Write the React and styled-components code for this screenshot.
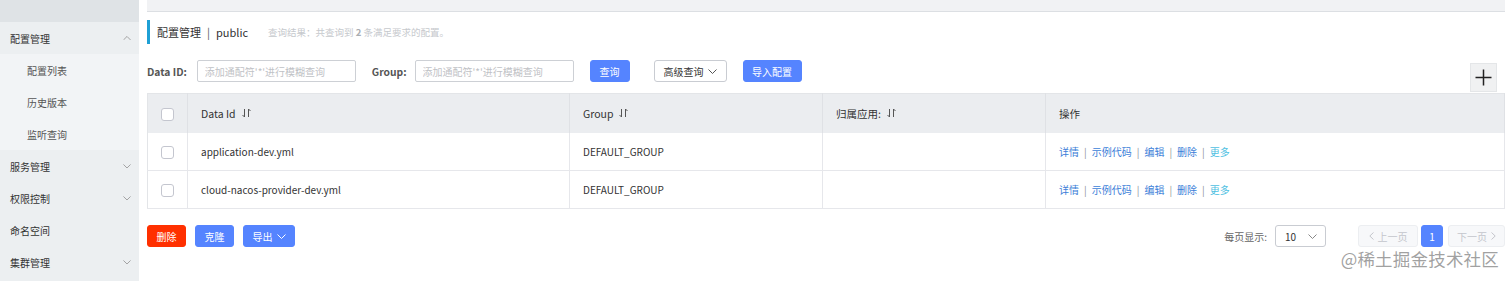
import React from 'react'
import styled, { createGlobalStyle } from 'styled-components'

const GlobalStyle = createGlobalStyle`
  html, body {
    margin: 0;
    padding: 0;
    background: #fff;
  }
  body {
    font-family: "Noto Sans CJK SC", "Noto Sans", sans-serif;
    font-size: 10px;
    color: #333;
  }
  * {
    box-sizing: border-box;
  }
`

const Layout = styled.div`
  position: relative;
  display: flex;
  height: 281px;
  overflow: hidden;
`

const Sidebar = styled.aside`
  width: 139px;
  flex-shrink: 0;
  display: flex;
  flex-direction: column;
  background: #eceff1;
`

const SideTop = styled.div`
  height: 22px;
  background: #dfe3e6;
`

const MenuItem = styled.div`
  height: 32px;
  display: flex;
  align-items: center;
  justify-content: space-between;
  padding: 0 8px 0 ${(p) => (p.$sub ? 27 : 10)}px;
  background: ${(p) => (p.$sub ? '#f2f4f6' : 'transparent')};
  color: ${(p) => (p.$sub ? '#555' : '#333')};
`

const Main = styled.main`
  flex: 1;
  display: flex;
  flex-direction: column;
  padding: 0 7px 0 8px;
`

const Crumb = styled.div`
  height: 12px;
  background: #f1f2f4;
  border-bottom: 1px solid #dcdfe3;
`

const TitleRow = styled.div`
  margin-top: 8px;
  height: 24px;
  display: flex;
  align-items: center;
  border-left: 3px solid #1fa0d5;
  padding-left: 7px;
`

const TitleText = styled.span`
  font-size: 11px;
  color: #333;
`

const Pipe = styled.span`
  margin: 0 6px;
  font-size: 11px;
  color: #555;
`

const Summary = styled.span`
  margin-left: 20px;
  font-size: 9.5px;
  color: #c6c9cd;

  b {
    color: #a9adb2;
  }
`

const FilterRow = styled.div`
  margin-top: 16px;
  display: flex;
  align-items: flex-start;
`

const Label = styled.label`
  height: 22px;
  display: flex;
  align-items: center;
  margin: 0 ${(p) => p.$after || 10}px 0 ${(p) => p.$gap || 0}px;
  font-size: 10.3px;
  font-weight: bold;
  color: #555;
`

const Input = styled.input`
  width: 159px;
  height: 22px;
  padding: 0 7px;
  border: 1px solid #cdd0d5;
  border-radius: 2px;
  font-family: inherit;
  font-size: 10px;
  outline: none;

  &::placeholder {
    color: #bfc2c6;
  }
`

const Button = styled.button`
  height: 22px;
  width: ${(p) => p.$w}px;
  margin-left: ${(p) => p.$gap || 0}px;
  padding: 0;
  display: inline-flex;
  align-items: center;
  justify-content: center;
  gap: 4px;
  border-radius: 3px;
  font-family: inherit;
  font-size: 10px;
  border: 1px solid
    ${(p) => (p.$kind === 'ghost' ? '#c9ccd2' : p.$kind === 'danger' ? '#ff3000' : '#5584ff')};
  background: ${(p) => (p.$kind === 'ghost' ? '#fff' : p.$kind === 'danger' ? '#ff3000' : '#5584ff')};
  color: ${(p) => (p.$kind === 'ghost' ? '#333' : '#fff')};
`

const PlusButton = styled.div`
  margin: 3px 8px 0 auto;
  width: 27px;
  height: 29px;
  display: flex;
  align-items: center;
  justify-content: center;
  background: #f0f1f2;
  border: 1px solid #e4e6e8;
`

const Table = styled.table`
  margin-top: 1px;
  width: 100%;
  border-collapse: collapse;
  table-layout: fixed;
  border: 1px solid #e3e5e8;
`

const Th = styled.th`
  height: 39px;
  padding: 0 13px;
  background: #ebedf0;
  border-right: 1px solid #dfe1e5;
  text-align: ${(p) => (p.$center ? 'center' : 'left')};
  font-weight: normal;
  font-size: 10.5px;
  color: #333;
`

const Td = styled.td`
  height: 38px;
  padding: 0 13px;
  border-right: 1px solid #e6e7eb;
  border-bottom: 1px solid #e6e7eb;
  text-align: ${(p) => (p.$center ? 'center' : 'left')};
  color: #333;
`

const HeadCell = styled.span`
  display: inline-flex;
  align-items: center;
  gap: 6px;
`

const Check = styled.span`
  display: inline-block;
  width: 13px;
  height: 13px;
  vertical-align: middle;
  border: 1px solid #c4c6cf;
  border-radius: 3px;
  background: #fff;
`

const Link = styled.a`
  color: ${(p) => (p.$more ? '#4fbfe2' : '#3b7ed8')};
  text-decoration: none;
`

const Sep = styled.span`
  margin: 0 5px;
  color: #8f949a;
`

const Footer = styled.div`
  margin-top: 16px;
  display: flex;
  align-items: center;
  justify-content: space-between;
`

const Group = styled.div`
  display: flex;
  align-items: center;
`

const PageLabel = styled.span`
  margin-right: 8px;
  color: #666;
`

const Select = styled.div`
  width: 51px;
  height: 22px;
  display: flex;
  align-items: center;
  justify-content: space-between;
  padding: 0 8px 0 9px;
  border: 1px solid #c9ccd2;
  border-radius: 3px;
  color: #333;
`

const PageBtn = styled.div`
  height: 22px;
  width: ${(p) => p.$w}px;
  margin-left: ${(p) => p.$gap || 0}px;
  display: flex;
  align-items: center;
  justify-content: center;
  gap: 4px;
  border-radius: 3px;
  border: 1px solid ${(p) => (p.$active ? '#5584ff' : '#eceef1')};
  background: ${(p) => (p.$active ? '#5584ff' : '#f7f8fa')};
  color: ${(p) => (p.$active ? '#fff' : '#c4c6cc')};
`

const Watermark = styled.div`
  position: absolute;
  right: 13px;
  bottom: 10px;
  font-size: 17.5px;
  color: rgba(130, 130, 130, 0.75);
  text-shadow: 0 0 2px #fff;
  letter-spacing: 0.2px;
`

function Chevron({ up, color = '#999', w = 8 }) {
  return (
    <svg width={w} height={w / 1.8} viewBox="0 0 9 5" fill="none">
      <polyline
        points={up ? '0.5,4.5 4.5,0.5 8.5,4.5' : '0.5,0.5 4.5,4.5 8.5,0.5'}
        stroke={color}
        strokeWidth="1"
      />
    </svg>
  )
}

function SortIcon() {
  return (
    <svg width="9" height="10" viewBox="0 0 9 10" fill="none" stroke="#555" strokeWidth="1">
      <path d="M2.5 1V9L0.5 7" />
      <path d="M6.5 9V1L8.5 3" />
    </svg>
  )
}

function Arrow({ left }) {
  return (
    <svg width="5" height="8" viewBox="0 0 5 8" fill="none">
      <polyline points={left ? '4.5,0.5 0.8,4 4.5,7.5' : '0.5,0.5 4.2,4 0.5,7.5'} stroke="#c4c6cc" strokeWidth="1" />
    </svg>
  )
}

const menu = [
  { title: '配置管理', open: true, children: ['配置列表', '历史版本', '监听查询'] },
  { title: '服务管理', arrow: true },
  { title: '权限控制', arrow: true },
  { title: '命名空间' },
  { title: '集群管理', arrow: true },
]

const rows = [
  { id: 'application-dev.yml', group: 'DEFAULT_GROUP' },
  { id: 'cloud-nacos-provider-dev.yml', group: 'DEFAULT_GROUP' },
]

const actions = ['详情', '示例代码', '编辑', '删除']

function App() {
  return (
    <Layout>
      <GlobalStyle />
      <Sidebar>
        <SideTop />
        {menu.map((item) => (
          <React.Fragment key={item.title}>
            <MenuItem>
              <span>{item.title}</span>
              {item.open && <Chevron up />}
              {item.arrow && <Chevron />}
            </MenuItem>
            {item.children &&
              item.children.map((c) => (
                <MenuItem $sub key={c}>
                  {c}
                </MenuItem>
              ))}
          </React.Fragment>
        ))}
      </Sidebar>

      <Main>
        <Crumb />
        <TitleRow>
          <TitleText>配置管理</TitleText>
          <Pipe>|</Pipe>
          <TitleText>public</TitleText>
          <Summary>
            查询结果：共查询到 <b>2</b> 条满足要求的配置。
          </Summary>
        </TitleRow>

        <FilterRow>
          <Label>Data ID:</Label>
          <Input placeholder="添加通配符'*'进行模糊查询" />
          <Label $gap={16} $after={8}>Group:</Label>
          <Input placeholder="添加通配符'*'进行模糊查询" />
          <Button $w={40} $gap={16}>查询</Button>
          <Button $w={73} $gap={24} $kind="ghost">
            高级查询 <Chevron color="#555" w={9} />
          </Button>
          <Button $w={59} $gap={16}>导入配置</Button>
          <PlusButton>
            <svg width="17" height="17" viewBox="0 0 17 17" stroke="#222" strokeWidth="1.5">
              <path d="M8.5 0.5V16.5M0.5 8.5H16.5" />
            </svg>
          </PlusButton>
        </FilterRow>

        <Table>
          <colgroup>
            <col style={{ width: 40 }} />
            <col style={{ width: 382 }} />
            <col style={{ width: 253 }} />
            <col style={{ width: 223 }} />
            <col />
          </colgroup>
          <thead>
            <tr>
              <Th $center>
                <Check />
              </Th>
              <Th>
                <HeadCell>
                  Data Id <SortIcon />
                </HeadCell>
              </Th>
              <Th>
                <HeadCell>
                  Group <SortIcon />
                </HeadCell>
              </Th>
              <Th>
                <HeadCell>
                  归属应用: <SortIcon />
                </HeadCell>
              </Th>
              <Th>操作</Th>
            </tr>
          </thead>
          <tbody>
            {rows.map((r) => (
              <tr key={r.id}>
                <Td $center>
                  <Check />
                </Td>
                <Td>{r.id}</Td>
                <Td>{r.group}</Td>
                <Td />
                <Td>
                  {actions.map((a) => (
                    <React.Fragment key={a}>
                      <Link href="#">{a}</Link>
                      <Sep>|</Sep>
                    </React.Fragment>
                  ))}
                  <Link href="#" $more>
                    更多
                  </Link>
                </Td>
              </tr>
            ))}
          </tbody>
        </Table>

        <Footer>
          <Group>
            <Button $w={39} $kind="danger">删除</Button>
            <Button $w={39} $gap={9}>克隆</Button>
            <Button $w={52} $gap={9}>
              导出 <Chevron color="#fff" w={9} />
            </Button>
          </Group>
          <Group>
            <PageLabel>每页显示:</PageLabel>
            <Select>
              <span>10</span>
              <Chevron color="#888" w={9} />
            </Select>
            <PageBtn $w={60} $gap={32}>
              <Arrow left /> 上一页
            </PageBtn>
            <PageBtn $w={22} $gap={3} $active>
              1
            </PageBtn>
            <PageBtn $w={57} $gap={5}>
              下一页 <Arrow />
            </PageBtn>
          </Group>
        </Footer>
      </Main>
      <Watermark>@稀土掘金技术社区</Watermark>
    </Layout>
  )
}

export default App
